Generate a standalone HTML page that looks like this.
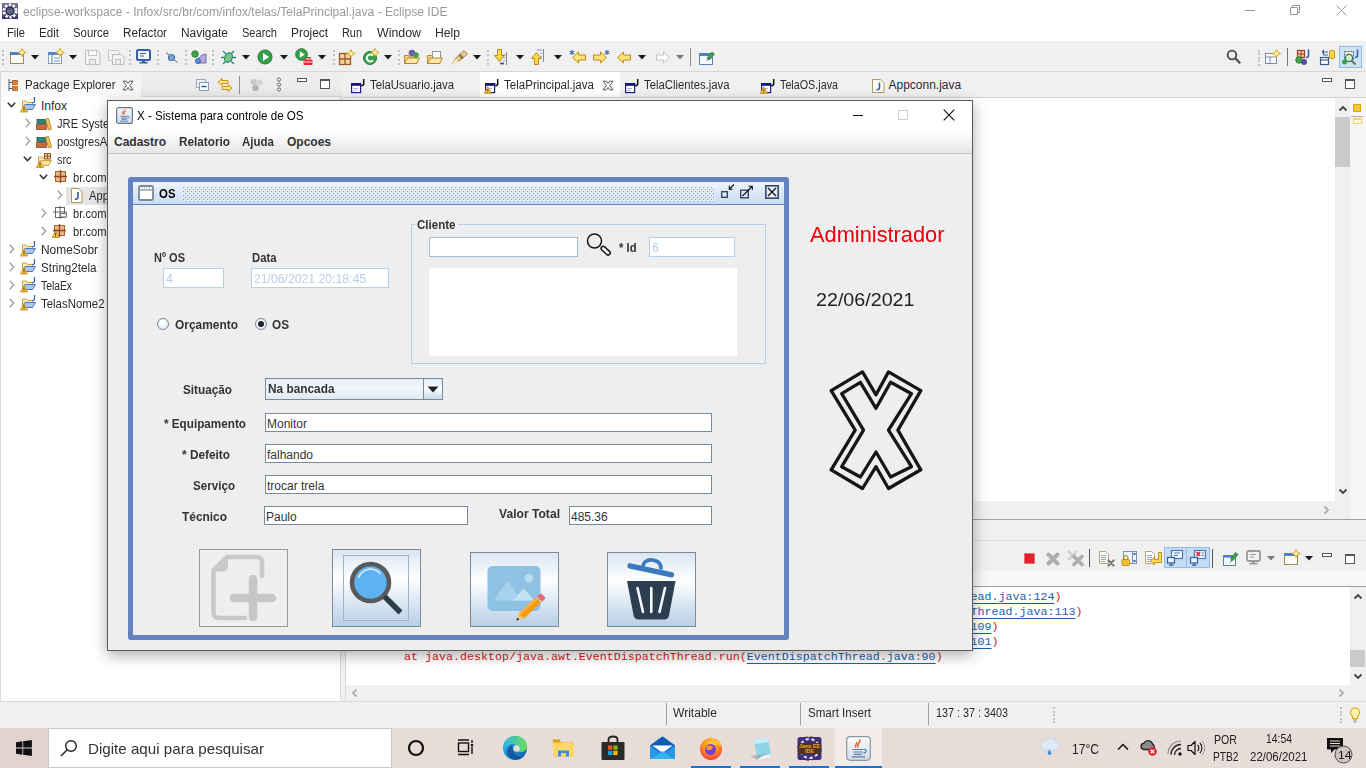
<!DOCTYPE html>
<html lang="pt-BR"><head><meta charset="utf-8"><title>eclipse-workspace - Infox - Eclipse IDE</title>
<style>
*{box-sizing:border-box;margin:0;padding:0}
html,body{width:1366px;height:768px;overflow:hidden;background:#f0f0f0;font-family:"Liberation Sans",sans-serif;}
div,span,svg{position:absolute}
.t{white-space:pre;transform-origin:0 50%;display:block}
.tf{background:#fff;border:1px solid #7a8a99}
.tfd{background:#fff;border:1px solid #b8cfe5}
.btn{border:1px solid #7a8a99;background:linear-gradient(180deg,#dbe6f2 0%,#ffffff 38%,#e3ecf6 62%,#b8cfe5 100%)}
</style></head><body>
<div style="left:0;top:0;width:1366px;height:41px;background:#fff"></div>
<div style="left:0;top:41px;width:1366px;height:31px;background:#f0f0f0;border-bottom:1px solid #d6d6d6"></div>
<div style="left:0;top:72px;width:341px;height:630px;background:#fff;border:1px solid #d9d9d9"></div>
<div style="left:1px;top:72px;width:140px;height:25px;background:linear-gradient(180deg,#f2f2f2,#fbfbfb)"></div>
<div style="left:141px;top:72px;width:200px;height:25px;background:linear-gradient(180deg,#efefef,#e9e9e9);border-bottom:1px solid #dadada"></div>
<div style="left:345px;top:72px;width:1021px;height:448px;background:#fff"></div>
<div style="left:345px;top:72px;width:1021px;height:25px;background:#f0f0f0"></div>
<div style="left:480px;top:72px;width:140px;height:26px;background:#fff"></div>
<div style="left:345px;top:97px;width:1021px;height:1px;background:#d2d2d2"></div>
<div style="left:1335px;top:98px;width:15px;height:403px;background:#f0f0f0"></div>
<div style="left:1335px;top:117px;width:15px;height:50px;background:#cacaca"></div>
<div style="left:1350px;top:98px;width:16px;height:421px;background:#f6f6f6"></div>
<div style="left:345px;top:501px;width:1005px;height:18px;background:#f0f0f0"></div>
<div style="left:345px;top:519px;width:1021px;height:1px;background:#a0a0a0"></div>
<div style="left:345px;top:540px;width:1021px;height:1px;background:#dcdcdc"></div>
<div style="left:345px;top:545px;width:1021px;height:26px;background:#f0f0f0"></div>
<div style="left:345px;top:571px;width:1021px;height:15px;background:#f7f7f7"></div>
<div style="left:345px;top:586px;width:1021px;height:115px;background:#fff;border-top:1px solid #a0a0a0;border-left:1px solid #d9d9d9"></div>
<div style="left:1350px;top:587px;width:16px;height:98px;background:#f0f0f0"></div>
<div style="left:1350px;top:650px;width:15px;height:17px;background:#cacaca"></div>
<div style="left:346px;top:685px;width:1020px;height:16px;background:#f0f0f0"></div>
<div style="left:0;top:701px;width:1366px;height:27px;background:#f0f0f0;border-top:1px solid #dadada"></div>
<div style="left:0;top:728px;width:1366px;height:40px;background:#e8dcd8"></div>
<div style="left:0;top:728px;width:48px;height:40px;background:#e3d3d0"></div>
<div style="left:48px;top:728px;width:344px;height:40px;background:#fff;border:1px solid #c8c8c8"></div>
<span class="t" style="left:23px;top:3.5px;font-size:12px;line-height:17px;color:#999;transform:scaleX(1.0071);">eclipse-workspace - Infox/src/br/com/infox/telas/TelaPrincipal.java - Eclipse IDE</span>
<span class="t" style="left:7px;top:24.5px;font-size:12px;line-height:17px;color:#2b2b2b;transform:scaleX(0.9305);">File</span>
<span class="t" style="left:39px;top:24.5px;font-size:12px;line-height:17px;color:#2b2b2b;transform:scaleX(0.9668);">Edit</span>
<span class="t" style="left:73px;top:24.5px;font-size:12px;line-height:17px;color:#2b2b2b;transform:scaleX(0.9466);">Source</span>
<span class="t" style="left:123px;top:24.5px;font-size:12px;line-height:17px;color:#2b2b2b;transform:scaleX(0.9700);">Refactor</span>
<span class="t" style="left:181px;top:24.5px;font-size:12px;line-height:17px;color:#2b2b2b;transform:scaleX(0.9921);">Navigate</span>
<span class="t" style="left:242px;top:24.5px;font-size:12px;line-height:17px;color:#2b2b2b;transform:scaleX(0.9203);">Search</span>
<span class="t" style="left:291px;top:24.5px;font-size:12px;line-height:17px;color:#2b2b2b;transform:scaleX(0.9904);">Project</span>
<span class="t" style="left:342px;top:24.5px;font-size:12px;line-height:17px;color:#2b2b2b;transform:scaleX(0.9084);">Run</span>
<span class="t" style="left:377px;top:24.5px;font-size:12px;line-height:17px;color:#2b2b2b;transform:scaleX(1.0307);">Window</span>
<span class="t" style="left:435px;top:24.5px;font-size:12px;line-height:17px;color:#2b2b2b;transform:scaleX(1.0127);">Help</span>
<span class="t" style="left:24.5px;top:76.5px;font-size:12px;line-height:17px;color:#2b2b2b;transform:scaleX(0.9555);">Package Explorer</span>
<span class="t" style="left:369.5px;top:76.5px;font-size:12px;line-height:17px;color:#2b2b2b;transform:scaleX(0.9468);">TelaUsuario.java</span>
<span class="t" style="left:503.5px;top:76.5px;font-size:12px;line-height:17px;color:#2b2b2b;transform:scaleX(0.9637);">TelaPrincipal.java</span>
<span class="t" style="left:643.5px;top:76.5px;font-size:12px;line-height:17px;color:#2b2b2b;transform:scaleX(0.9425);">TelaClientes.java</span>
<span class="t" style="left:780px;top:76.5px;font-size:12px;line-height:17px;color:#2b2b2b;transform:scaleX(0.8964);">TelaOS.java</span>
<span class="t" style="left:888.5px;top:76.5px;font-size:12px;line-height:17px;color:#2b2b2b;">Appconn.java</span>
<div style="left:66px;top:187px;width:60px;height:18px;background:#e5e5e5"></div>
<span class="t" style="left:41px;top:98px;font-size:12px;line-height:17px;color:#2b2b2b;">Infox</span>
<span class="t" style="left:56.5px;top:116px;font-size:12px;line-height:17px;color:#2b2b2b;transform:scaleX(.93);">JRE System Library [JavaSE-11]</span>
<span class="t" style="left:57px;top:134px;font-size:12px;line-height:17px;color:#2b2b2b;transform:scaleX(.93);">postgresAPI</span>
<span class="t" style="left:57px;top:152px;font-size:12px;line-height:17px;color:#2b2b2b;transform:scaleX(0.9062);">src</span>
<span class="t" style="left:73px;top:170px;font-size:12px;line-height:17px;color:#2b2b2b;transform:scaleX(.93);">br.com.infox.dal</span>
<span class="t" style="left:89px;top:188px;font-size:12px;line-height:17px;color:#2b2b2b;transform:scaleX(.93);">Appconn.java</span>
<span class="t" style="left:73px;top:206px;font-size:12px;line-height:17px;color:#2b2b2b;transform:scaleX(.93);">br.com.infox.icones</span>
<span class="t" style="left:73px;top:224px;font-size:12px;line-height:17px;color:#2b2b2b;transform:scaleX(.93);">br.com.infox.telas</span>
<span class="t" style="left:41px;top:242px;font-size:12px;line-height:17px;color:#2b2b2b;transform:scaleX(0.9937);">NomeSobr</span>
<span class="t" style="left:41px;top:260px;font-size:12px;line-height:17px;color:#2b2b2b;transform:scaleX(0.9673);">String2tela</span>
<span class="t" style="left:41px;top:278px;font-size:12px;line-height:17px;color:#2b2b2b;transform:scaleX(0.8604);">TelaEx</span>
<span class="t" style="left:41px;top:296px;font-size:12px;line-height:17px;color:#2b2b2b;transform:scaleX(0.9520);">TelasNome2</span>
<span class="t" style="left:404px;top:588.7px;font-size:11.67px;line-height:16px;color:#dc1616;font-family:'Liberation Mono', monospace;">at java.desktop/java.awt.EventDispatchThread.pumpEventsForFilter(<span style="position:static;color:#1a5fae;text-decoration:underline;text-underline-offset:2.5px;text-decoration-thickness:1px">EventDispatchThread.java:124</span>)</span>
<span class="t" style="left:404px;top:603.7px;font-size:11.67px;line-height:16px;color:#dc1616;font-family:'Liberation Mono', monospace;">at java.desktop/java.awt.EventDispatchThread.pumpEventsForHierarchy(<span style="position:static;color:#1a5fae;text-decoration:underline;text-underline-offset:2.5px;text-decoration-thickness:1px">EventDispatchThread.java:113</span>)</span>
<span class="t" style="left:404px;top:618.7px;font-size:11.67px;line-height:16px;color:#dc1616;font-family:'Liberation Mono', monospace;">at java.desktop/java.awt.EventDispatchThread.pumpEvents(<span style="position:static;color:#1a5fae;text-decoration:underline;text-underline-offset:2.5px;text-decoration-thickness:1px">EventDispatchThread.java:109</span>)</span>
<span class="t" style="left:404px;top:633.7px;font-size:11.67px;line-height:16px;color:#dc1616;font-family:'Liberation Mono', monospace;">at java.desktop/java.awt.EventDispatchThread.pumpEvents(<span style="position:static;color:#1a5fae;text-decoration:underline;text-underline-offset:2.5px;text-decoration-thickness:1px">EventDispatchThread.java:101</span>)</span>
<span class="t" style="left:404px;top:648.7px;font-size:11.67px;line-height:16px;color:#dc1616;font-family:'Liberation Mono', monospace;">at java.desktop/java.awt.EventDispatchThread.run(<span style="position:static;color:#1a5fae;text-decoration:underline;text-underline-offset:2.5px;text-decoration-thickness:1px">EventDispatchThread.java:90</span>)</span>
<span class="t" style="left:673px;top:704.5px;font-size:12px;line-height:17px;color:#2b2b2b;transform:scaleX(1.0046);">Writable</span>
<span class="t" style="left:808px;top:704.5px;font-size:12px;line-height:17px;color:#2b2b2b;transform:scaleX(0.9639);">Smart Insert</span>
<span class="t" style="left:936px;top:704.5px;font-size:12px;line-height:17px;color:#2b2b2b;transform:scaleX(0.8991);">137 : 37 : 3403</span>
<span class="t" style="left:88px;top:737.5px;font-size:15px;line-height:21px;color:#333;transform:scaleX(1.0099);">Digite aqui para pesquisar</span>
<span class="t" style="left:1071.5px;top:737.5px;font-size:15px;line-height:21px;color:#222;transform:scaleX(0.8056);">17°C</span>
<span class="t" style="left:1214px;top:731.5px;font-size:12px;line-height:17px;color:#222;transform:scaleX(0.8841);">POR</span>
<span class="t" style="left:1213px;top:749px;font-size:12px;line-height:17px;color:#222;transform:scaleX(0.8496);">PTB2</span>
<span class="t" style="left:1265.5px;top:731px;font-size:12px;line-height:17px;color:#222;transform:scaleX(0.8658);">14:54</span>
<span class="t" style="left:1250px;top:749px;font-size:12px;line-height:17px;color:#222;transform:scaleX(0.9573);">22/06/2021</span>
<svg style="left:2px;top:3px" width="16" height="16" viewBox="0 0 16 16"><defs><linearGradient id="ecg" x1="0" y1="0" x2="0" y2="1"><stop offset="0" stop-color="#77759a"/><stop offset=".75" stop-color="#4a4778"/><stop offset="1" stop-color="#2f2c72"/></linearGradient></defs><rect width="16" height="16" fill="url(#ecg)"/><circle cx="8" cy="8" r="6.300" fill="none" stroke="#fff" stroke-width="2.400" stroke-dasharray="2.400 1.560"/><circle cx="8" cy="8" r="5.200" fill="#fff"/><circle cx="8" cy="8" r="4.100" fill="#55527e" stroke="#17162c" stroke-width="1.100"/><path d="M5.200 7.500h5.600M5.200 9.300h5.600" stroke="#77759a" stroke-width=".8"/></svg>
<div style="left:1245px;top:10px;width:10px;height:1px;background:#999"></div>
<svg style="left:1290px;top:5px" width="10" height="10" viewBox="0 0 10 10"><path d="M2.5 2.5V.5h7v7h-2M.5 2.5h7v7h-7z" fill="none" stroke="#999" stroke-width="1"/></svg>
<svg style="left:1336px;top:5px" width="11" height="11" viewBox="0 0 11 11"><path d="M.5.5l10 10M10.500 .5l-10 10" stroke="#999" stroke-width="1"/></svg>
<div style="left:2px;top:50px;width:2px;height:2px;background:#c2c2c2"></div><div style="left:2px;top:54.4px;width:2px;height:2px;background:#c2c2c2"></div><div style="left:2px;top:58.8px;width:2px;height:2px;background:#c2c2c2"></div><div style="left:2px;top:63.2px;width:2px;height:2px;background:#c2c2c2"></div>
<svg style="left:9px;top:48px" width="18" height="17" viewBox="0 0 18 17"><rect x="1.500" y="4.500" width="13" height="11" fill="#fdfcf3" stroke="#9c8a55" stroke-width="1"/><rect x="1" y="4" width="14" height="3" fill="#4f7fc4"/><path d="M13 0.5l1.300 2.700 2.900 1.300-2.900 1.300-1.300 2.700-1.300-2.700-2.900-1.300 2.900-1.300z" fill="#fff3a8" stroke="#d6a21c" stroke-width=".9" stroke-linejoin="round"/></svg>
<svg style="left:31px;top:55px" width="8" height="5" viewBox="0 0 8 5"><path d="M0 0h8L4 4.6z" fill="#1a1a1a"/></svg>
<svg style="left:47px;top:48px" width="18" height="17" viewBox="0 0 18 17"><rect x="1.500" y="4.500" width="13" height="11" fill="#fdfdfd" stroke="#8aa0c0" stroke-width="1"/><rect x="1" y="4" width="14" height="3" fill="#5a86c8"/><path d="M5 7v9M7 10h6M7 13h6" stroke="#6a8fc8" stroke-width="1.2"/><path d="M13 0.5l1.300 2.700 2.900 1.300-2.900 1.300-1.300 2.700-1.300-2.700-2.900-1.300 2.900-1.300z" fill="#fff3a8" stroke="#d6a21c" stroke-width=".9" stroke-linejoin="round"/></svg>
<svg style="left:69px;top:55px" width="8" height="5" viewBox="0 0 8 5"><path d="M0 0h8L4 4.6z" fill="#1a1a1a"/></svg>
<svg style="left:85px;top:50px" width="16" height="15" viewBox="0 0 16 15"><path d="M.5.5h12l2.500 2.500v11.500h-14.500z" fill="#f3f3f3" stroke="#bcbcbc"/><rect x="3.500" y=".5" width="8" height="5" fill="#fafafa" stroke="#c4c4c4"/><rect x="4.500" y="9.500" width="6" height="5" fill="#e9e9e9" stroke="#c4c4c4"/></svg>
<svg style="left:108px;top:50px" width="17" height="15" viewBox="0 0 17 15"><path d="M.5.5h9l2 2v8h-11z" fill="#f3f3f3" stroke="#c6c6c6"/><path d="M4.500 4.500h9l2.500 2.500v7.500h-11.500z" fill="#f3f3f3" stroke="#bcbcbc"/><rect x="7.500" y="9.500" width="5" height="5" fill="#e9e9e9" stroke="#c4c4c4"/></svg>
<div style="left:129px;top:50px;width:2px;height:2px;background:#c2c2c2"></div><div style="left:129px;top:54.4px;width:2px;height:2px;background:#c2c2c2"></div><div style="left:129px;top:58.8px;width:2px;height:2px;background:#c2c2c2"></div><div style="left:129px;top:63.2px;width:2px;height:2px;background:#c2c2c2"></div>
<svg style="left:136px;top:49px" width="15" height="15" viewBox="0 0 15 15"><rect x="1" y="1" width="13" height="10" rx="1.500" fill="#f4f8ff" stroke="#3560a8" stroke-width="2"/><path d="M4 4.500h6M4 7h4" stroke="#3560a8" stroke-width="1.200"/><path d="M6 11h3v2h2.500v1.500h-8v-1.500h2.500z" fill="#3560a8"/></svg>
<div style="left:157px;top:50px;width:2px;height:2px;background:#c2c2c2"></div><div style="left:157px;top:54.4px;width:2px;height:2px;background:#c2c2c2"></div><div style="left:157px;top:58.8px;width:2px;height:2px;background:#c2c2c2"></div><div style="left:157px;top:63.2px;width:2px;height:2px;background:#c2c2c2"></div>
<svg style="left:165px;top:51px" width="14" height="13" viewBox="0 0 14 13"><circle cx="6.500" cy="6.500" r="3" fill="#7fb0e6" stroke="#3a6fb5" stroke-width="1.200"/><path d="M1 1.500l11.500 10" stroke="#8b8fa0" stroke-width="1.100"/></svg>
<div style="left:185px;top:50px;width:2px;height:2px;background:#c2c2c2"></div><div style="left:185px;top:54.4px;width:2px;height:2px;background:#c2c2c2"></div><div style="left:185px;top:58.8px;width:2px;height:2px;background:#c2c2c2"></div><div style="left:185px;top:63.2px;width:2px;height:2px;background:#c2c2c2"></div>
<svg style="left:190px;top:49px" width="18" height="17" viewBox="0 0 18 17"><path d="M8 14c0-5 2-8 8-9v9z" fill="#b8a8e0" stroke="#7a68b8" stroke-width="1"/><circle cx="5" cy="5" r="3.300" fill="#3fa24a" stroke="#2a7a34" stroke-width=".8"/><circle cx="8" cy="12" r="2.600" fill="#5a8ed6" stroke="#2f5fa8" stroke-width=".8"/></svg>
<div style="left:212px;top:50px;width:2px;height:2px;background:#c2c2c2"></div><div style="left:212px;top:54.4px;width:2px;height:2px;background:#c2c2c2"></div><div style="left:212px;top:58.8px;width:2px;height:2px;background:#c2c2c2"></div><div style="left:212px;top:63.2px;width:2px;height:2px;background:#c2c2c2"></div>
<svg style="left:220px;top:49px" width="17" height="17" viewBox="0 0 17 17"><path d="M3 2l3 3M14 2l-3 3M1 8.500h4M12 8.500h4M3 15l3-3M14 15l-3-3" stroke="#2d7f92" stroke-width="1.300" fill="none"/><ellipse cx="8.500" cy="8.500" rx="3.600" ry="5" fill="#7cc38a" stroke="#2d8a58" stroke-width="1.200" transform="rotate(25 8.500 8.500)"/></svg>
<svg style="left:242px;top:55px" width="8" height="5" viewBox="0 0 8 5"><path d="M0 0h8L4 4.6z" fill="#1a1a1a"/></svg>
<svg style="left:257px;top:49px" width="16" height="16" viewBox="0 0 16 16"><circle cx="8" cy="8" r="7" fill="#35a24a" stroke="#1f7a32" stroke-width="1"/><path d="M6 4v8l6-4z" fill="#fff"/></svg>
<svg style="left:280px;top:55px" width="8" height="5" viewBox="0 0 8 5"><path d="M0 0h8L4 4.6z" fill="#1a1a1a"/></svg>
<svg style="left:295px;top:48px" width="19" height="18" viewBox="0 0 19 18"><circle cx="6.500" cy="6.500" r="5.800" fill="#35a24a" stroke="#1f7a32" stroke-width="1"/><path d="M4.800 3.200v6.600l5-3.300z" fill="#fff"/><rect x="8.500" y="11.500" width="9" height="5.500" rx="1" fill="#e2262e"/><path d="M11 11.500v-1.500h4v1.500M8.500 14h9" stroke="#fff" stroke-width=".9" fill="none"/><path d="M11 11.500v-1.800h4v1.800" stroke="#e2262e" stroke-width="1.200" fill="none"/></svg>
<svg style="left:318px;top:55px" width="8" height="5" viewBox="0 0 8 5"><path d="M0 0h8L4 4.6z" fill="#1a1a1a"/></svg>
<div style="left:333px;top:50px;width:2px;height:2px;background:#c2c2c2"></div><div style="left:333px;top:54.4px;width:2px;height:2px;background:#c2c2c2"></div><div style="left:333px;top:58.8px;width:2px;height:2px;background:#c2c2c2"></div><div style="left:333px;top:63.2px;width:2px;height:2px;background:#c2c2c2"></div>
<svg style="left:338px;top:49px" width="18" height="17" viewBox="0 0 18 17"><rect x="1.500" y="4.500" width="11" height="11" fill="#f3d3a6" stroke="#9a5a22" stroke-width="1.300"/><path d="M7 4.500v11M1.500 10h11" stroke="#9a5a22" stroke-width="1.300"/><path d="M13 0.5l1.300 2.700 2.900 1.300-2.900 1.300-1.300 2.700-1.300-2.700-2.900-1.300 2.900-1.300z" fill="#fff3a8" stroke="#d6a21c" stroke-width=".9" stroke-linejoin="round"/></svg>
<svg style="left:362px;top:48px" width="18" height="18" viewBox="0 0 18 18"><circle cx="8" cy="10" r="6.500" fill="#35a24a" stroke="#1f7a32" stroke-width="1"/><path d="M11 7.500a3.600 3.600 0 1 0 0 5" stroke="#fff" stroke-width="2" fill="none"/><path d="M13 0.5l1.300 2.700 2.900 1.300-2.900 1.300-1.300 2.700-1.300-2.700-2.900-1.300 2.900-1.300z" fill="#fff3a8" stroke="#d6a21c" stroke-width=".9" stroke-linejoin="round"/></svg>
<svg style="left:384px;top:55px" width="8" height="5" viewBox="0 0 8 5"><path d="M0 0h8L4 4.6z" fill="#1a1a1a"/></svg>
<div style="left:398px;top:50px;width:2px;height:2px;background:#c2c2c2"></div><div style="left:398px;top:54.4px;width:2px;height:2px;background:#c2c2c2"></div><div style="left:398px;top:58.8px;width:2px;height:2px;background:#c2c2c2"></div><div style="left:398px;top:63.2px;width:2px;height:2px;background:#c2c2c2"></div>
<svg style="left:403px;top:48px" width="19" height="18" viewBox="0 0 19 18"><path d="M1.500 15.500v-8h4l1.500 1.500h7v6.500z" fill="#f6d58a" stroke="#b98522" stroke-width="1"/><path d="M1.500 15.500l3-5.500h12l-3 5.500z" fill="#fbe6ac" stroke="#b98522" stroke-width="1"/><circle cx="9" cy="5" r="3.300" fill="#6a5fb0"/><circle cx="13" cy="7" r="2.800" fill="#3fa24a"/></svg>
<svg style="left:426px;top:49px" width="18" height="17" viewBox="0 0 18 17"><path d="M1.500 14.500v-8h4l1.500 1.500h7v6.500z" fill="#f6d58a" stroke="#b98522" stroke-width="1"/><rect x="6.500" y="2.500" width="8" height="7" fill="#fff" stroke="#8a8a8a" stroke-width=".9"/><path d="M1.500 14.500l3-5.500h12l-3 5.500z" fill="#fbe6ac" stroke="#b98522" stroke-width="1"/></svg>
<svg style="left:450px;top:48px" width="20" height="18" viewBox="0 0 20 18"><path d="M2 16l4-6 8-7.500 3.500 3.500-8.500 7z" fill="#e9c98a" stroke="#b08a3a" stroke-width="1"/><path d="M9 6.500l4 4" stroke="#8a7a5a" stroke-width="2.500"/><path d="M1 17l5-6 2.500 2.500z" fill="#fff6d8"/></svg>
<svg style="left:473px;top:55px" width="8" height="5" viewBox="0 0 8 5"><path d="M0 0h8L4 4.6z" fill="#1a1a1a"/></svg>
<div style="left:487px;top:50px;width:2px;height:2px;background:#c2c2c2"></div><div style="left:487px;top:54.4px;width:2px;height:2px;background:#c2c2c2"></div><div style="left:487px;top:58.8px;width:2px;height:2px;background:#c2c2c2"></div><div style="left:487px;top:63.2px;width:2px;height:2px;background:#c2c2c2"></div>
<svg style="left:494px;top:48px" width="16" height="18" viewBox="0 0 16 18"><path d="M3.500 1.500h4v6h3l-5 6-5-6h3z" fill="#ffd84a" stroke="#b98a12" stroke-width="1"/><path d="M12.500 4v13" stroke="#8a8a8a" stroke-width="1"/><path d="M9 6.500h2.500M9 9.500h2.500M9 12.500h2.500" stroke="#9ab2d8" stroke-width="1"/><path d="M6 15.500h4" stroke="#2f5fb0" stroke-width="1.800"/></svg>
<svg style="left:516px;top:55px" width="8" height="5" viewBox="0 0 8 5"><path d="M0 0h8L4 4.6z" fill="#1a1a1a"/></svg>
<svg style="left:531px;top:48px" width="16" height="18" viewBox="0 0 16 18"><path d="M3.500 16.500h4v-6h3l-5-6-5 6h3z" fill="#ffd84a" stroke="#b98a12" stroke-width="1"/><path d="M12.500 1v13" stroke="#8a8a8a" stroke-width="1"/><path d="M9 2.500h2.500M9 5.500h2.500M9 8.500h2.500" stroke="#9ab2d8" stroke-width="1"/><path d="M6 2h4" stroke="#9ab2d8" stroke-width="1.500"/></svg>
<svg style="left:554px;top:55px" width="8" height="5" viewBox="0 0 8 5"><path d="M0 0h8L4 4.6z" fill="#1a1a1a"/></svg>
<svg style="left:569px;top:49px" width="18" height="17" viewBox="0 0 18 17"><path d="M3.5 8.500l6-5.500v3h7v5h-7v3z" fill="#ffe27a" stroke="#b98a12" stroke-width="1" stroke-linejoin="round"/><path d="M3 1v5M.8 2.200l4.400 2.600M.8 4.800l4.400-2.600" stroke="#3f68b0" stroke-width="1.100"/></svg>
<svg style="left:592px;top:49px" width="18" height="17" viewBox="0 0 18 17"><path d="M14.5 8.500l-6-5.500v3h-7v5h7v3z" fill="#ffe27a" stroke="#b98a12" stroke-width="1" stroke-linejoin="round"/><path d="M15 1v5M12.800 2.200l4.400 2.600M12.800 4.800l4.400-2.600" stroke="#3f68b0" stroke-width="1.100"/></svg>
<svg style="left:616px;top:49px" width="16" height="17" viewBox="0 0 16 17"><path d="M1.5 8.500l6-5.500v3h7v5h-7v3z" fill="#ffe27a" stroke="#b98a12" stroke-width="1" stroke-linejoin="round"/></svg>
<svg style="left:638px;top:55px" width="8" height="5" viewBox="0 0 8 5"><path d="M0 0h8L4 4.6z" fill="#1a1a1a"/></svg>
<svg style="left:655px;top:49px" width="16" height="17" viewBox="0 0 16 17"><path d="M14.5 8.500l-6-5.500v3h-7v5h7v3z" fill="#fbfbfb" stroke="#c4c4c4" stroke-width="1" stroke-linejoin="round"/></svg>
<svg style="left:676px;top:55px" width="8" height="5" viewBox="0 0 8 5"><path d="M0 0h8L4 4.6z" fill="#777"/></svg>
<div style="left:690px;top:48px;width:1px;height:18px;background:#8f8f8f"></div>
<svg style="left:698px;top:49px" width="18" height="17" viewBox="0 0 18 17"><rect x="1.500" y="4.500" width="13" height="11" fill="#f4f8ff" stroke="#5a7fb8" stroke-width="1"/><rect x="1" y="4" width="14" height="3" fill="#4f7fc4"/><path d="M9 9l5-6 2.500 2-5 6z" fill="#3fa24a" stroke="#1f7a32" stroke-width=".7"/><path d="M9 11.500l2-2.500" stroke="#555" stroke-width="1"/></svg>
<svg style="left:1226px;top:49px" width="16" height="16" viewBox="0 0 16 16"><circle cx="6" cy="6" r="4.300" fill="none" stroke="#4a4a4a" stroke-width="1.800"/><path d="M9.200 9.200l5 5" stroke="#4a4a4a" stroke-width="2.200"/></svg>
<div style="left:1258px;top:49.5px;width:2px;height:2px;background:#c2c2c2"></div><div style="left:1258px;top:53.1px;width:2px;height:2px;background:#c2c2c2"></div><div style="left:1258px;top:56.7px;width:2px;height:2px;background:#c2c2c2"></div><div style="left:1258px;top:60.3px;width:2px;height:2px;background:#c2c2c2"></div><div style="left:1258px;top:63.9px;width:2px;height:2px;background:#c2c2c2"></div>
<svg style="left:1264px;top:49px" width="18" height="17" viewBox="0 0 18 17"><rect x="1.500" y="4.500" width="11" height="10" fill="#fff" stroke="#7a8a9a" stroke-width="1"/><path d="M1.500 8h11M6 8v6.500" stroke="#7a8a9a" stroke-width="1"/><path d="M12.5 0.5l1.300 2.700 2.900 1.300-2.900 1.300-1.300 2.700-1.300-2.700-2.900-1.300 2.900-1.300z" fill="#fff3a8" stroke="#d6a21c" stroke-width=".9" stroke-linejoin="round"/></svg>
<div style="left:1287px;top:48px;width:1px;height:18px;background:#777"></div>
<svg style="left:1294px;top:48px" width="18" height="18" viewBox="0 0 18 18"><rect x="3.500" y="2.500" width="7" height="7" fill="#f3d3a6" stroke="#9a3a22" stroke-width="1.200"/><path d="M7 2.500v7M3.500 6h7" stroke="#9a3a22" stroke-width="1"/><path d="M14.500 1.500v6c0 1.500-1 2-2.500 2" stroke="#3560a8" stroke-width="1.600" fill="none"/><circle cx="5" cy="12" r="3.300" fill="#3fa24a" stroke="#2a7a34" stroke-width=".8"/><circle cx="10" cy="14" r="3" fill="#5a4f9a"/></svg>
<svg style="left:1318px;top:48px" width="19" height="18" viewBox="0 0 19 18"><rect x="11.500" y="2.500" width="5" height="8" rx="1.500" fill="#ffd84a" stroke="#c9961a" stroke-width="1"/><rect x="2.500" y="9.500" width="8" height="7" fill="#fff" stroke="#3a5a8a" stroke-width="1.200"/><path d="M2.500 12h8" stroke="#3a5a8a" stroke-width="1.200"/><path d="M4 4h6M4 4l2-2M4 4l2 2M10 7H5" stroke="#3560a8" stroke-width="1.100" fill="none"/></svg>
<div style="left:1339px;top:46px;width:23px;height:22px;background:#cfe3f8;border:1px solid #8fbbe8"></div>
<svg style="left:1341px;top:48px" width="19" height="18" viewBox="0 0 19 18"><rect x="3.500" y="3.500" width="9" height="8" fill="#f3e3c6" stroke="#3a6a9a" stroke-width="1" stroke-dasharray="2 1"/><path d="M16.500 1.500v6c0 1.500-1 2-2.500 2" stroke="#3560a8" stroke-width="1.600" fill="none"/><circle cx="8" cy="10" r="3.600" fill="#d8f0d0" stroke="#2a7a5a" stroke-width="1.300"/><path d="M10.500 12.500l4 4" stroke="#6a6a6a" stroke-width="2"/><circle cx="3.500" cy="14" r="2.500" fill="#3fa24a"/></svg>
<svg style="left:350px;top:78px" width="16" height="16" viewBox="0 0 16 16"><rect x="1.600" y="5.600" width="9" height="9" fill="#fff" stroke="#1a1a8a" stroke-width="1.200"/><rect x="1" y="5" width="10.200" height="2.800" fill="#15157e"/><path d="M3.500 10.500h4.500M3.500 12.500h3" stroke="#b0b0c8" stroke-width="1"/><path d="M13.700 1v4.800c0 1.500-.9 1.900-2.500 1.900" stroke="#111" stroke-width="1.500" fill="none"/></svg>
<svg style="left:484px;top:78px" width="16" height="16" viewBox="0 0 16 16"><rect x="1.600" y="5.600" width="9" height="9" fill="#fff" stroke="#1a1a8a" stroke-width="1.200"/><rect x="1" y="5" width="10.200" height="2.800" fill="#15157e"/><path d="M3.500 10.500h4.500M3.500 12.500h3" stroke="#b0b0c8" stroke-width="1"/><path d="M13.700 1v4.800c0 1.500-.9 1.900-2.500 1.900" stroke="#111" stroke-width="1.500" fill="none"/><path d="M3.8 8.8l3.600 6.500h-7.200z" fill="#f6c646" stroke="#c08a1a" stroke-width=".8" stroke-linejoin="round"/><path d="M3.8 11.0v2.200M3.8 13.8v.9" stroke="#4a3a10" stroke-width="1"/></svg>
<svg style="left:624px;top:78px" width="16" height="16" viewBox="0 0 16 16"><rect x="1.600" y="5.600" width="9" height="9" fill="#fff" stroke="#1a1a8a" stroke-width="1.200"/><rect x="1" y="5" width="10.200" height="2.800" fill="#15157e"/><path d="M3.500 10.500h4.500M3.500 12.500h3" stroke="#b0b0c8" stroke-width="1"/><path d="M13.700 1v4.800c0 1.500-.9 1.900-2.500 1.900" stroke="#111" stroke-width="1.500" fill="none"/></svg>
<svg style="left:760px;top:78px" width="16" height="16" viewBox="0 0 16 16"><rect x="1.600" y="5.600" width="9" height="9" fill="#fff" stroke="#1a1a8a" stroke-width="1.200"/><rect x="1" y="5" width="10.200" height="2.800" fill="#15157e"/><path d="M3.500 10.500h4.500M3.500 12.500h3" stroke="#b0b0c8" stroke-width="1"/><path d="M13.700 1v4.800c0 1.500-.9 1.900-2.500 1.900" stroke="#111" stroke-width="1.500" fill="none"/><path d="M3.8 8.8l3.600 6.500h-7.200z" fill="#f6c646" stroke="#c08a1a" stroke-width=".8" stroke-linejoin="round"/><path d="M3.8 11.0v2.200M3.8 13.8v.9" stroke="#4a3a10" stroke-width="1"/></svg>
<svg style="left:872px;top:79px" width="13" height="14" viewBox="0 0 13 14"><path d="M.5.5h8l3.500 3.500v9.500h-11.500z" fill="#fffdf2" stroke="#a89a6a" stroke-width="1"/><path d="M7.500 3.500v5c0 1.800-1 2.300-3 2" stroke="#2f5fb0" stroke-width="1.600" fill="none"/></svg>
<svg style="left:122px;top:79.500px" width="12.100" height="11" viewBox="0 0 11 10"><path d="M1 1l3 0 1.500 2.200L7 1l3 0-3 4 3 4-3 0-1.500-2.200L4 9 1 9l3-4z" fill="#fff" stroke="#555" stroke-width=".9" stroke-linejoin="round"/></svg>
<svg style="left:602px;top:79.500px" width="12.100" height="11" viewBox="0 0 11 10"><path d="M1 1l3 0 1.500 2.200L7 1l3 0-3 4 3 4-3 0-1.500-2.200L4 9 1 9l3-4z" fill="#fff" stroke="#555" stroke-width=".9" stroke-linejoin="round"/></svg>
<svg style="left:8px;top:79px" width="11" height="13" viewBox="0 0 11 13"><path d="M1 0v12M1 3.500h3M1 9.500h3" stroke="#555" stroke-width="1"/><rect x="4.500" y="1.500" width="5" height="4" fill="#e0924a" stroke="#a85a1a" stroke-width=".8"/><rect x="4.500" y="7.500" width="5" height="4" fill="#e0924a" stroke="#a85a1a" stroke-width=".8"/><path d="M7 1.500v4M7 7.500v4" stroke="#a85a1a" stroke-width=".6"/></svg>
<svg style="left:195px;top:78px" width="15" height="14" viewBox="0 0 15 14"><rect x="1.500" y="1.500" width="9" height="8" fill="#eef3fa" stroke="#9aaac0" stroke-width="1"/><rect x="4.500" y="4.500" width="9" height="8" fill="#f4f8ff" stroke="#8a9ab8" stroke-width="1"/><path d="M6.500 8.500h5" stroke="#2a5aa8" stroke-width="1.400"/></svg>
<svg style="left:217px;top:77px" width="16" height="16" viewBox="0 0 16 16"><path d="M1 5l4-3.500v2h6v3H5v2z" fill="#ffe27a" stroke="#c9961a" stroke-width="1" stroke-linejoin="round"/><path d="M15 11l-4-3.500v2H5v3h6v2z" fill="#ffe27a" stroke="#c9961a" stroke-width="1" stroke-linejoin="round"/></svg>
<div style="left:239px;top:76px;width:1px;height:18px;background:#8f8f8f"></div>
<svg style="left:249px;top:78px" width="15" height="14" viewBox="0 0 15 14"><circle cx="4.500" cy="4" r="3" fill="#c9c9c9"/><circle cx="10.500" cy="4.500" r="3" fill="#d4d4d4"/><circle cx="6.500" cy="10" r="3.200" fill="#b4b4b4"/></svg>
<svg style="left:276px;top:77px" width="6" height="15" viewBox="0 0 6 15"><circle cx="3" cy="2.500" r="1.600" fill="#fff" stroke="#555" stroke-width=".9"/><circle cx="3" cy="7.500" r="1.600" fill="#fff" stroke="#555" stroke-width=".9"/><circle cx="3" cy="12.500" r="1.600" fill="#fff" stroke="#555" stroke-width=".9"/></svg>
<div style="left:297px;top:78px;width:10px;height:4px;border:1px solid #555;background:#fff"></div><div style="left:320px;top:79px;width:10px;height:10px;border:1px solid #555;border-top-width:2px;background:#fff"></div>
<div style="left:1322px;top:78px;width:10px;height:4px;border:1px solid #555;background:#fff"></div><div style="left:1345px;top:79px;width:10px;height:10px;border:1px solid #555;border-top-width:2px;background:#fff"></div>
<svg style="left:7px;top:102px" width="9" height="6" viewBox="0 0 9 6"><path d="M.8.800l3.700 3.800 3.700-3.800" stroke="#333" stroke-width="1.500" fill="none"/></svg>
<svg style="left:20px;top:97px" width="17" height="16" viewBox="0 0 17 16"><path d="M2.500 12.500v-8.500h4l1 1.500h5v3" fill="#fbe9b5" stroke="#c9a24a" stroke-width="1"/><path d="M2.500 12.500l2.500-5h10.500l-3 5z" fill="#a8c8f0" stroke="#4a78c0" stroke-width="1"/><path d="M14.500 0v4c0 1.200-.8 1.500-2.200 1.500" stroke="#2f5fb0" stroke-width="1.200" fill="none"/><path d="M4 8.5l3.600 6.500h-7.200z" fill="#f6c646" stroke="#c08a1a" stroke-width=".8" stroke-linejoin="round"/><path d="M4 10.7v2.200M4 13.5v.9" stroke="#4a3a10" stroke-width="1"/></svg>
<svg style="left:25px;top:118px" width="6" height="10" viewBox="0 0 6 10"><path d="M.8.800l3.800 4.200-3.800 4.200" stroke="#a0a0a0" stroke-width="1.400" fill="none"/></svg>
<svg style="left:36px;top:118px" width="16" height="13" viewBox="0 0 16 13"><rect x="1" y="1.500" width="9" height="4" fill="#2a8a7a" stroke="#1a5a5a" stroke-width=".8"/><rect x=".5" y="6.500" width="10" height="5" fill="#c86a3a" stroke="#8a4a2a" stroke-width=".8"/><path d="M9.500 1l3-.8 3 11-3 .8z" fill="#f0c060" stroke="#b0842a" stroke-width=".8"/></svg>
<svg style="left:25px;top:136px" width="6" height="10" viewBox="0 0 6 10"><path d="M.8.800l3.800 4.200-3.800 4.200" stroke="#a0a0a0" stroke-width="1.400" fill="none"/></svg>
<svg style="left:36px;top:136px" width="16" height="13" viewBox="0 0 16 13"><rect x="1" y="1.500" width="9" height="4" fill="#2a8a7a" stroke="#1a5a5a" stroke-width=".8"/><rect x=".5" y="6.500" width="10" height="5" fill="#c86a3a" stroke="#8a4a2a" stroke-width=".8"/><path d="M9.500 1l3-.8 3 11-3 .8z" fill="#f0c060" stroke="#b0842a" stroke-width=".8"/></svg>
<svg style="left:23px;top:156px" width="9" height="6" viewBox="0 0 9 6"><path d="M.8.800l3.700 3.800 3.700-3.800" stroke="#333" stroke-width="1.500" fill="none"/></svg>
<svg style="left:36px;top:152px" width="17" height="16" viewBox="0 0 17 16"><path d="M2.500 13.500v-8.500h4l1 1.500h4" fill="#fbe9b5" stroke="#c9a24a" stroke-width="1"/><path d="M2.500 13.500l2.500-5h10.500l-3 5z" fill="#fbe3a0" stroke="#c9a24a" stroke-width="1"/><rect x="8.500" y="1.500" width="6" height="5.500" fill="#f0d0a8" stroke="#8a4a1a" stroke-width=".9"/><path d="M11.500 1.500v5.500M8.500 4.200h6" stroke="#8a4a1a" stroke-width=".9"/><path d="M4 9l3.600 6.500h-7.200z" fill="#f6c646" stroke="#c08a1a" stroke-width=".8" stroke-linejoin="round"/><path d="M4 11.2v2.200M4 14v.9" stroke="#4a3a10" stroke-width="1"/></svg>
<svg style="left:39px;top:174px" width="9" height="6" viewBox="0 0 9 6"><path d="M.8.800l3.700 3.800 3.700-3.800" stroke="#333" stroke-width="1.500" fill="none"/></svg>
<svg style="left:53px;top:170px" width="15" height="15" viewBox="0 0 15 15"><rect x="2.500" y="1.500" width="10" height="10" fill="#e8b88a" stroke="#a8622a" stroke-width="1"/><path d="M7.500 0v13M1 6.500h13" stroke="#8a4a1a" stroke-width="1.300"/></svg>
<svg style="left:57px;top:190px" width="6" height="10" viewBox="0 0 6 10"><path d="M.8.800l3.800 4.200-3.800 4.200" stroke="#a0a0a0" stroke-width="1.400" fill="none"/></svg>
<svg style="left:71px;top:188px" width="12" height="15" viewBox="0 0 12 15"><path d="M.5.500h7l3.500 3.500v10.500h-10.500z" fill="#fffdf2" stroke="#a89a6a" stroke-width="1"/><path d="M7 4v5c0 1.800-1 2.300-3 2" stroke="#2f5fb0" stroke-width="1.600" fill="none"/></svg>
<svg style="left:41px;top:208px" width="6" height="10" viewBox="0 0 6 10"><path d="M.8.800l3.800 4.200-3.800 4.200" stroke="#a0a0a0" stroke-width="1.400" fill="none"/></svg>
<svg style="left:53px;top:206px" width="15" height="15" viewBox="0 0 15 15"><rect x="2.500" y="1.500" width="9" height="10" fill="#fff" stroke="#666" stroke-width="1"/><path d="M7 0v13M0 6h14" stroke="#666" stroke-width="1"/><rect x="7.500" y="7.500" width="6" height="3.500" fill="#fff" stroke="#666" stroke-width=".9"/></svg>
<svg style="left:41px;top:226px" width="6" height="10" viewBox="0 0 6 10"><path d="M.8.800l3.800 4.200-3.800 4.200" stroke="#a0a0a0" stroke-width="1.400" fill="none"/></svg>
<svg style="left:52px;top:224px" width="15" height="15" viewBox="0 0 15 15"><rect x="2.500" y="1.500" width="10" height="10" fill="#e8b88a" stroke="#a8622a" stroke-width="1"/><path d="M7.500 0v13M1 6.500h13" stroke="#8a4a1a" stroke-width="1.300"/><path d="M3.6 7l3.600 6.500h-7.200z" fill="#f6c646" stroke="#c08a1a" stroke-width=".8" stroke-linejoin="round"/><path d="M3.6 9.2v2.200M3.6 12v.9" stroke="#4a3a10" stroke-width="1"/></svg>
<svg style="left:9px;top:244px" width="6" height="10" viewBox="0 0 6 10"><path d="M.8.800l3.800 4.200-3.800 4.200" stroke="#a0a0a0" stroke-width="1.400" fill="none"/></svg>
<svg style="left:20px;top:241px" width="17" height="16" viewBox="0 0 17 16"><path d="M2.500 12.500v-8.500h4l1 1.500h5v3" fill="#fbe9b5" stroke="#c9a24a" stroke-width="1"/><path d="M2.500 12.500l2.500-5h10.500l-3 5z" fill="#a8c8f0" stroke="#4a78c0" stroke-width="1"/><path d="M14.500 0v4c0 1.200-.8 1.500-2.200 1.500" stroke="#2f5fb0" stroke-width="1.200" fill="none"/><path d="M4 8.5l3.600 6.500h-7.200z" fill="#f6c646" stroke="#c08a1a" stroke-width=".8" stroke-linejoin="round"/><path d="M4 10.7v2.200M4 13.5v.9" stroke="#4a3a10" stroke-width="1"/></svg>
<svg style="left:9px;top:262px" width="6" height="10" viewBox="0 0 6 10"><path d="M.8.800l3.800 4.200-3.800 4.200" stroke="#a0a0a0" stroke-width="1.400" fill="none"/></svg>
<svg style="left:20px;top:259px" width="17" height="16" viewBox="0 0 17 16"><path d="M2.500 12.500v-8.500h4l1 1.500h5v3" fill="#fbe9b5" stroke="#c9a24a" stroke-width="1"/><path d="M2.500 12.500l2.500-5h10.500l-3 5z" fill="#a8c8f0" stroke="#4a78c0" stroke-width="1"/><path d="M14.500 0v4c0 1.200-.8 1.500-2.200 1.500" stroke="#2f5fb0" stroke-width="1.200" fill="none"/><path d="M4 8.5l3.600 6.500h-7.200z" fill="#f6c646" stroke="#c08a1a" stroke-width=".8" stroke-linejoin="round"/><path d="M4 10.7v2.200M4 13.5v.9" stroke="#4a3a10" stroke-width="1"/></svg>
<svg style="left:9px;top:280px" width="6" height="10" viewBox="0 0 6 10"><path d="M.8.800l3.800 4.200-3.800 4.200" stroke="#a0a0a0" stroke-width="1.400" fill="none"/></svg>
<svg style="left:20px;top:277px" width="17" height="16" viewBox="0 0 17 16"><path d="M2.500 12.500v-8.500h4l1 1.500h5v3" fill="#fbe9b5" stroke="#c9a24a" stroke-width="1"/><path d="M2.500 12.500l2.500-5h10.500l-3 5z" fill="#a8c8f0" stroke="#4a78c0" stroke-width="1"/><path d="M14.500 0v4c0 1.200-.8 1.500-2.200 1.500" stroke="#2f5fb0" stroke-width="1.200" fill="none"/><path d="M4 8.5l3.600 6.500h-7.200z" fill="#f6c646" stroke="#c08a1a" stroke-width=".8" stroke-linejoin="round"/><path d="M4 10.7v2.200M4 13.5v.9" stroke="#4a3a10" stroke-width="1"/></svg>
<svg style="left:9px;top:298px" width="6" height="10" viewBox="0 0 6 10"><path d="M.8.800l3.800 4.200-3.800 4.200" stroke="#a0a0a0" stroke-width="1.400" fill="none"/></svg>
<svg style="left:20px;top:295px" width="17" height="16" viewBox="0 0 17 16"><path d="M2.500 12.500v-8.500h4l1 1.500h5v3" fill="#fbe9b5" stroke="#c9a24a" stroke-width="1"/><path d="M2.500 12.500l2.500-5h10.500l-3 5z" fill="#a8c8f0" stroke="#4a78c0" stroke-width="1"/><path d="M14.500 0v4c0 1.200-.8 1.500-2.200 1.500" stroke="#2f5fb0" stroke-width="1.200" fill="none"/><path d="M4 8.5l3.600 6.500h-7.200z" fill="#f6c646" stroke="#c08a1a" stroke-width=".8" stroke-linejoin="round"/><path d="M4 10.7v2.200M4 13.5v.9" stroke="#4a3a10" stroke-width="1"/></svg>
<div style="left:1024px;top:553px;width:11px;height:11px;background:#e0202c;border:1px solid #f06a6a;border-radius:1px"></div>
<svg style="left:1046px;top:552px" width="14" height="14" viewBox="0 0 14 14"><path d="M2.5 2.5l9 9M11.5 2.5l-9 9" stroke="#adadad" stroke-width="4" stroke-linecap="round"/></svg>
<svg style="left:1067px;top:550px" width="18" height="17" viewBox="0 0 18 17"><path d="M2 2l7 7M9 2l-7 7" stroke="#d2d2d2" stroke-width="2.8" stroke-linecap="round"/><path d="M7 6.5l8 8M15 6.5l-8 8" stroke="#adadad" stroke-width="3.6" stroke-linecap="round"/></svg>
<div style="left:1089px;top:549px;width:1px;height:18px;background:#555"></div>
<svg style="left:1098px;top:550px" width="18" height="17" viewBox="0 0 18 17"><path d="M1.5 1.5h6l3 3v9h-9z" fill="#fff" stroke="#a89a6a" stroke-width=".9"/><path d="M3 5.5h5M3 7.5h5M3 9.5h5M3 11.5h4" stroke="#6a8fd0" stroke-width=".8"/><path d="M10.5 10.5l5 5M15.5 10.5l-5 5" stroke="#777" stroke-width="2.2" stroke-linecap="round"/></svg>
<svg style="left:1121px;top:550px" width="18" height="17" viewBox="0 0 18 17"><rect x="2.500" y="1.500" width="13" height="12" fill="#eef4fb" stroke="#7a94b8" stroke-width="1"/><path d="M11.500 1.500v12" stroke="#7a94b8" stroke-width="1"/><rect x="12.500" y="3" width="2" height="2" fill="#3a5a9a"/><rect x="12.500" y="10" width="2" height="2" fill="#3a5a9a"/><rect x="1" y="9.500" width="7.500" height="6" rx="1" fill="#f2c030" stroke="#b98a12" stroke-width=".9"/><path d="M2.800 9.500v-2a2 2 0 0 1 4 0v2" stroke="#b98a12" stroke-width="1.200" fill="none"/></svg>
<svg style="left:1144px;top:550px" width="18" height="17" viewBox="0 0 18 17"><path d="M1.5 1.5h6l3 3v9h-9z" fill="#fff" stroke="#a89a6a" stroke-width=".9"/><path d="M3 5.5h5M3 7.5h5M3 9.5h5M3 11.5h4" stroke="#6a8fd0" stroke-width=".8"/><path d="M14.500 2.500v7h-4v-2.500l-4 4 4 4v-2.500h7v-10z" fill="#ffd84a" stroke="#b98a12" stroke-width=".9" stroke-linejoin="round"/></svg>
<div style="left:1164px;top:547px;width:23px;height:21px;background:#c6dcf5;border:1px solid #93bde9"></div>
<div style="left:1187px;top:547px;width:23px;height:21px;background:#c6dcf5;border:1px solid #93bde9;border-left:none"></div>
<svg style="left:1166px;top:549px" width="18" height="17" viewBox="0 0 18 17"><rect x="5.500" y="1.500" width="11" height="8" fill="#f4f8ff" stroke="#4a78b8" stroke-width="1.200"/><path d="M8 4h6M8 6.500h4" stroke="#4a78b8" stroke-width="1"/><rect x="1.500" y="8.500" width="7" height="5.500" fill="#e8f0fb" stroke="#2f5fa8" stroke-width="1.200"/><path d="M3 16.200h4.500M5.200 14v2" stroke="#2f5fa8" stroke-width="1.300"/></svg>
<svg style="left:1189px;top:549px" width="18" height="17" viewBox="0 0 18 17"><rect x="5.500" y="1.500" width="11" height="8" fill="#f4f8ff" stroke="#4a78b8" stroke-width="1.200"/><path d="M7.500 3l3.500 4M11 3l-3.500 4" stroke="#e02030" stroke-width="1.600"/><path d="M12.500 4h2.500M12.500 6.500h2.500" stroke="#4a78b8" stroke-width="1"/><rect x="1.500" y="8.500" width="7" height="5.500" fill="#e8f0fb" stroke="#2f5fa8" stroke-width="1.200"/><path d="M3 16.200h4.500M5.200 14v2" stroke="#2f5fa8" stroke-width="1.300"/></svg>
<div style="left:1212px;top:549px;width:1px;height:19px;background:#555"></div>
<svg style="left:1222px;top:550px" width="18" height="17" viewBox="0 0 18 17"><rect x="1.500" y="5.500" width="12" height="10" fill="#f4f8ff" stroke="#5a7fb8" stroke-width="1"/><rect x="1" y="5" width="13" height="2.600" fill="#4f7fc4"/><path d="M8.500 9l5-6.500 2.500 2-5 6z" fill="#3fa24a" stroke="#1f7a32" stroke-width=".7"/><path d="M8 12.500l2.200-2.800" stroke="#555" stroke-width="1"/></svg>
<svg style="left:1246px;top:550px" width="15" height="16" viewBox="0 0 15 16"><rect x="1" y="1" width="13" height="10" rx="1.500" fill="#f1f1f1" stroke="#9a9a9a" stroke-width="1.800"/><path d="M4 4.500h6M4 7h4" stroke="#9a9a9a" stroke-width="1.100"/><path d="M6 11h3v2h2.500v1.500h-8v-1.500h2.500z" fill="#9a9a9a"/></svg>
<svg style="left:1267px;top:556px" width="8" height="5" viewBox="0 0 8 5"><path d="M0 0h8L4 4.6z" fill="#7a7a7a"/></svg>
<svg style="left:1283px;top:549px" width="18" height="17" viewBox="0 0 18 17"><rect x="1.500" y="4.500" width="13" height="11" fill="#fdfcf3" stroke="#9c8a55" stroke-width="1"/><rect x="1" y="4" width="14" height="3" fill="#4f7fc4"/><path d="M13 0.5l1.300 2.700 2.900 1.300-2.900 1.300-1.300 2.700-1.300-2.700-2.900-1.300 2.900-1.300z" fill="#fff3a8" stroke="#d6a21c" stroke-width=".9" stroke-linejoin="round"/></svg>
<svg style="left:1305px;top:556px" width="8" height="5" viewBox="0 0 8 5"><path d="M0 0h8L4 4.6z" fill="#1a1a1a"/></svg>
<div style="left:1322px;top:553px;width:10px;height:4px;border:1px solid #555;background:#fff"></div><div style="left:1345px;top:554px;width:10px;height:10px;border:1px solid #555;border-top-width:2px;background:#fff"></div>
<svg style="left:1338px;top:105px" width="10" height="7" viewBox="0 0 10 7"><path d="M1.5 5.500l3.500-3.500 3.500 3.500" stroke="#444" stroke-width="1.900" fill="none"/></svg>
<svg style="left:1338px;top:488px" width="10" height="7" viewBox="0 0 10 7"><path d="M1.5 1.500l3.500 3.500 3.500-3.500" stroke="#444" stroke-width="1.900" fill="none"/></svg>
<svg style="left:1323px;top:505px" width="7" height="10" viewBox="0 0 7 10"><path d="M1.500 1.500l3.500 3.500-3.500 3.500" stroke="#b0b0b0" stroke-width="1.900" fill="none"/></svg>
<svg style="left:1353px;top:593px" width="10" height="7" viewBox="0 0 10 7"><path d="M1.5 5.500l3.500-3.500 3.500 3.500" stroke="#444" stroke-width="1.900" fill="none"/></svg>
<svg style="left:1353px;top:673px" width="10" height="7" viewBox="0 0 10 7"><path d="M1.5 1.500l3.500 3.500 3.500-3.500" stroke="#444" stroke-width="1.900" fill="none"/></svg>
<svg style="left:351px;top:688px" width="7" height="10" viewBox="0 0 7 10"><path d="M5.500 1.500l-3.500 3.500 3.500 3.500" stroke="#b0b0b0" stroke-width="1.900" fill="none"/></svg>
<svg style="left:1338px;top:688px" width="7" height="10" viewBox="0 0 7 10"><path d="M1.500 1.500l3.500 3.500-3.500 3.500" stroke="#b0b0b0" stroke-width="1.900" fill="none"/></svg>
<div style="left:1353px;top:104px;width:8px;height:8px;background:#f0c83c;border:1px solid #d8a820"></div>
<div style="left:1351px;top:116px;width:12px;height:1px;background:#a8a8a8"></div>
<div style="left:1353px;top:118px;width:9px;height:6px;border:1px solid #f0d46a;border-top-width:2px;background:#fffbe6"></div>
<div style="left:666px;top:703px;width:1px;height:22px;background:#a0a0a0"></div>
<div style="left:800px;top:703px;width:1px;height:22px;background:#a0a0a0"></div>
<div style="left:928px;top:703px;width:1px;height:22px;background:#a0a0a0"></div>
<div style="left:1053px;top:707px;width:2px;height:2px;background:#c2c2c2"></div><div style="left:1053px;top:710.6px;width:2px;height:2px;background:#c2c2c2"></div><div style="left:1053px;top:714.2px;width:2px;height:2px;background:#c2c2c2"></div><div style="left:1053px;top:717.8px;width:2px;height:2px;background:#c2c2c2"></div><div style="left:1053px;top:721.4px;width:2px;height:2px;background:#c2c2c2"></div>
<div style="left:1340px;top:707px;width:2px;height:2px;background:#c2c2c2"></div><div style="left:1340px;top:710.6px;width:2px;height:2px;background:#c2c2c2"></div><div style="left:1340px;top:714.2px;width:2px;height:2px;background:#c2c2c2"></div><div style="left:1340px;top:717.8px;width:2px;height:2px;background:#c2c2c2"></div><div style="left:1340px;top:721.4px;width:2px;height:2px;background:#c2c2c2"></div>
<svg style="left:1349px;top:707px" width="12" height="17" viewBox="0 0 12 17"><path d="M6 1a4.500 4.500 0 0 0-2.500 8.200v2.300h5v-2.300A4.500 4.500 0 0 0 6 1z" fill="#fff3b0" stroke="#e0a820" stroke-width="1.100"/><path d="M4 13h4M4.500 15h3" stroke="#8a8aa0" stroke-width="1.200"/></svg>
<svg style="left:16px;top:740px" width="16" height="16" viewBox="0 0 17 17"><path d="M0 2.400l6.900-1v6.700H0zM7.700 1.300L16.900 0v8.100H7.700zM0 8.900h6.900v6.700l-6.900-1zM7.700 8.900h9.200V17l-9.200-1.300z" fill="#111"/></svg>
<svg style="left:60px;top:739px" width="18" height="18" viewBox="0 0 18 18"><circle cx="11" cy="7" r="5.300" fill="none" stroke="#222" stroke-width="1.400"/><path d="M7.200 10.800L1 17" stroke="#222" stroke-width="1.500"/></svg>
<svg style="left:407px;top:739px" width="18" height="18" viewBox="0 0 18 18"><circle cx="9" cy="9" r="7" fill="none" stroke="#111" stroke-width="2.200"/></svg>
<svg style="left:456px;top:739px" width="18" height="17" viewBox="0 0 18 17"><rect x="2.500" y="4" width="10" height="8.500" fill="none" stroke="#111" stroke-width="1.400"/><path d="M2 1h11M2 15.500h11" stroke="#111" stroke-width="1.400"/><path d="M16 1v3M16 8v7" stroke="#111" stroke-width="1.400"/><rect x="14.800" y="5" width="2.400" height="2.400" fill="#111"/></svg>
<svg style="left:502px;top:735px" width="26" height="26" viewBox="0 0 26 26"><defs><linearGradient id="eg" x1="0" y1="0" x2="1" y2="1"><stop offset="0" stop-color="#35c1f1"/><stop offset="1" stop-color="#0c59a4"/></linearGradient><linearGradient id="eg2" x1="0" y1="0" x2="1" y2="0"><stop offset="0" stop-color="#2fbde0"/><stop offset="1" stop-color="#6bdb5a"/></linearGradient></defs><circle cx="13" cy="13" r="12" fill="url(#eg)"/><path d="M2 10C4 3 10 .8 14.500 1c6 .3 10.500 5 10.500 10 0 4-3 6-6.500 6-3 0-4-1.500-3.500-3 1-2-1.500-5-5-5-4 0-7 2.500-8 5z" fill="url(#eg2)"/><path d="M11 13.500c0 6 5 9.500 11 7.500-3 4-10 5-14.500 1C3 18 5 11 11 9.500c-1 1-1 2.500 0 4z" fill="#0f4f9a" opacity=".85"/><circle cx="14.500" cy="13.500" r="3.200" fill="#e8dcd7"/></svg>
<svg style="left:552px;top:738px" width="23" height="20" viewBox="0 0 23 20"><path d="M1 2.500h7l1.500 2H22v14H1z" fill="#f0b429"/><rect x="1" y="5" width="21" height="13.500" rx=".8" fill="#fcd667"/><path d="M6 18.500v-6h11v6h-3v-3.500h-5v3.500z" fill="#3a8fd8"/><rect x="1" y="1.500" width="7" height="2" fill="#d99a1a"/></svg>
<svg style="left:601px;top:735px" width="24" height="26" viewBox="0 0 24 26"><path d="M7.500 7V4.500c0-2 1.500-3 4.500-3s4.500 1 4.500 3V7" fill="none" stroke="#222" stroke-width="1.800"/><rect x=".5" y="7" width="23" height="18" rx="1" fill="#2b2b2b"/><rect x="7" y="10.500" width="4.300" height="4.300" fill="#f25022"/><rect x="12.300" y="10.500" width="4.300" height="4.300" fill="#7fba00"/><rect x="7" y="15.800" width="4.300" height="4.300" fill="#00a4ef"/><rect x="12.300" y="15.800" width="4.300" height="4.300" fill="#ffb900"/></svg>
<svg style="left:650px;top:736px" width="25" height="24" viewBox="0 0 25 24"><path d="M0 9.500L12.500 .5 25 9.500V23H0z" fill="#1a74d0"/><path d="M0 9.500L12.500 .5 25 9.500z" fill="#0f5cb0"/><path d="M2.500 9.500h20L12.500 17z" fill="#fff"/><path d="M0 23l12.500-8L25 23z" fill="#35b0f0"/><path d="M0 9.500V23l9-6.500z" fill="#2a96e8"/><path d="M25 9.500V23l-9-6.500z" fill="#2a96e8"/></svg>
<div style="left:835px;top:728px;width:47px;height:40px;background:#f3ebe8"></div>
<div style="left:691px;top:766px;width:40px;height:2px;background:#1673d1"></div>
<div style="left:740px;top:766px;width:40px;height:2px;background:#1673d1"></div>
<div style="left:789px;top:766px;width:40px;height:2px;background:#1673d1"></div>
<div style="left:835px;top:766px;width:47px;height:2px;background:#1673d1"></div>
<svg style="left:698px;top:735px" width="26" height="26" viewBox="0 0 26 26"><defs><radialGradient id="fg" cx=".5" cy=".3" r=".8"><stop offset="0" stop-color="#ffd43a"/><stop offset=".5" stop-color="#ff8a1e"/><stop offset="1" stop-color="#e8264f"/></radialGradient></defs><circle cx="13" cy="14" r="11" fill="url(#fg)"/><path d="M13 1c1 2 3 3 4.500 5 3-1 5 2 5.500 5l-4-1-6-3z" fill="#ffc22e"/><circle cx="12.500" cy="14.500" r="5.500" fill="#7a3fd0"/><path d="M8 12c2-2 5-2 7 0l-2 3h-4z" fill="#ff9a2a"/></svg>
<svg style="left:748px;top:736px" width="26" height="26" viewBox="0 0 26 26"><path d="M6 3l14-1.500 3 19-14 3z" fill="#8ed3e8"/><path d="M6 3l14-1.500.8 4.500-14 2z" fill="#c8eef8"/><path d="M2 20l7 3.500 14-3-4-2.500z" fill="#9a9a9a" opacity=".6"/><path d="M9 24l14-3-1-3c-5 1-9 2-13 6z" fill="#e8f4f8"/></svg>
<svg style="left:797px;top:736px" width="25" height="25" viewBox="0 0 25 25"><circle cx="12.500" cy="12.500" r="11" fill="none" stroke="#555" stroke-width="2.600" stroke-dasharray="3.400 2.400"/><rect x=".5" y="1" width="24" height="23" rx="2.500" fill="#3f2e7a"/><circle cx="12.500" cy="12.500" r="9.500" fill="none" stroke="#e6e0f0" stroke-width="2" stroke-dasharray="3.200 2.600"/><rect x="1.500" y="7" width="22" height="11" fill="#4a3320"/><text x="12.500" y="12.200" font-family="Liberation Sans,sans-serif" font-size="5.500" font-weight="700" fill="#f6a21e" text-anchor="middle">Java EE</text><text x="12.500" y="17.400" font-family="Liberation Sans,sans-serif" font-size="5.500" font-weight="700" fill="#f6a21e" text-anchor="middle">IDE</text></svg>
<svg style="left:846px;top:736px" width="25" height="25" viewBox="0 0 25 25"><rect x=".7" y=".7" width="23.600" height="23.600" rx="3.500" fill="url(#jg2)" stroke="#8a98aa" stroke-width="1.200"/><defs><linearGradient id="jg2" x1="0" y1="0" x2="0" y2="1"><stop offset="0" stop-color="#fbfcfe"/><stop offset="1" stop-color="#cfdae8"/></linearGradient></defs><path d="M13.500 3.500c2.500 2.500-4 4.500-1.200 8M10.500 6c1.300 2-2.400 3-.7 5.500" stroke="#e2652a" stroke-width="1.500" fill="none"/><path d="M6.500 13.500h11M7.500 16h9M8 18.300h8M6 20.800h13" stroke="#5a7ea8" stroke-width="1.200"/><path d="M17.500 13.500c3.500-.6 3.500 3.200-.3 3.600" stroke="#5a7ea8" stroke-width="1.200" fill="none"/></svg>
<svg style="left:1039px;top:737px" width="22" height="20" viewBox="0 0 22 20"><path d="M6 13a4.500 4.500 0 0 1 .5-9 6 6 0 0 1 11 1.500 3.800 3.800 0 0 1-.5 7.500z" fill="#dfeaf6" stroke="#c0d0e4" stroke-width=".8"/><path d="M10.500 12.500c1.200 1.800 1.800 2.800 1.800 3.800a1.800 1.800 0 0 1-3.600 0c0-1 .6-2 1.800-3.800z" fill="#3a8fe0"/></svg>
<svg style="left:1117px;top:743px" width="12" height="8" viewBox="0 0 12 8"><path d="M1 6.500l5-5 5 5" stroke="#111" stroke-width="1.500" fill="none"/></svg>
<svg style="left:1139px;top:739px" width="20" height="18" viewBox="0 0 20 18"><path d="M4.500 10.500a3.200 3.200 0 0 1 .5-6.300 4.600 4.600 0 0 1 8.600 1 3 3 0 0 1 .2 5.300z" fill="#8a8a8a" stroke="#222" stroke-width="1.300"/><circle cx="13.500" cy="12.500" r="4.300" fill="#e0202c"/><path d="M11.700 10.700l3.600 3.600M15.300 10.700l-3.600 3.600" stroke="#fff" stroke-width="1.300"/></svg>
<svg style="left:1166px;top:739px" width="18" height="18" viewBox="0 0 18 18"><path d="M2 15A13 13 0 0 1 15 2" fill="none" stroke="#8a8a8a" stroke-width="1.200"/><path d="M5 15.500A10 10 0 0 1 15 5.500" fill="none" stroke="#222" stroke-width="1.300"/><path d="M8.500 16A6.500 6.500 0 0 1 15 9.500" fill="none" stroke="#222" stroke-width="1.300"/><circle cx="14" cy="15" r="1.700" fill="#111"/></svg>
<svg style="left:1187px;top:740px" width="20" height="16" viewBox="0 0 20 16"><path d="M1 5.500h3l4-4v13l-4-4H1z" fill="none" stroke="#111" stroke-width="1.200" stroke-linejoin="round"/><path d="M10.500 5a4 4 0 0 1 0 6M12.800 3a7 7 0 0 1 0 10" fill="none" stroke="#111" stroke-width="1.100"/><path d="M15 1a10 10 0 0 1 0 14" fill="none" stroke="#9a9a9a" stroke-width="1"/></svg>
<svg style="left:1326px;top:737px" width="28" height="28" viewBox="0 0 28 28"><path d="M1 1h16v11.500H8.500L5 16v-3.500H1z" fill="#111"/><path d="M4 4h10M4 6.500h10M4 9h10" stroke="#e8dcd7" stroke-width="1"/><circle cx="17.500" cy="17.500" r="8.500" fill="#cfc6c2" stroke="#4a4a4a" stroke-width="1"/></svg>
<span class="t" style="left:1337.5px;top:747px;font-size:11.5px;line-height:16px;color:#111;transform:scaleX(1.0549);">14</span>
<div style="left:107px;top:100px;width:866px;height:551px;background:#eeeeee;border:1px solid #5a5a5a;box-shadow:0 4px 14px rgba(0,0,0,.33)"></div>
<div style="left:108px;top:101px;width:864px;height:30px;background:#fff"></div>
<div style="left:108px;top:131px;width:864px;height:22px;background:linear-gradient(180deg,#ffffff,#e6e6e6)"></div>
<div style="left:108px;top:153px;width:864px;height:1px;background:#c4c4c4"></div>
<div style="left:128px;top:177px;width:661px;height:463px;background:#eeeeee;border:5px solid #6382bf;border-radius:3px"></div>
<div style="left:133px;top:182px;width:651px;height:23px;background:linear-gradient(180deg,#eef3fa,#c8ddf2);border-bottom:1px solid #6382bf"></div>
<span class="t" style="left:137px;top:107.5px;font-size:12px;line-height:17px;color:#000;transform:scaleX(0.9638);">X - Sistema para controle de OS</span>
<span class="t" style="left:114px;top:133.5px;font-size:12px;line-height:17px;color:#333;font-weight:700;">Cadastro</span>
<span class="t" style="left:179px;top:133.5px;font-size:12px;line-height:17px;color:#333;font-weight:700;transform:scaleX(0.9805);">Relatorio</span>
<span class="t" style="left:242px;top:133.5px;font-size:12px;line-height:17px;color:#333;font-weight:700;transform:scaleX(0.9597);">Ajuda</span>
<span class="t" style="left:287px;top:133.5px;font-size:12px;line-height:17px;color:#333;font-weight:700;">Opcoes</span>
<div class="tfd" style="left:163px;top:268px;width:61px;height:20px"></div>
<div class="tfd" style="left:251px;top:268px;width:138px;height:20px"></div>
<span class="t" style="left:166px;top:270.7px;font-size:12px;line-height:17px;color:#b8cfe5;">4</span>
<span class="t" style="left:253.5px;top:270.7px;font-size:12px;line-height:17px;color:#b8cfe5;transform:scaleX(1.0172);">21/06/2021 20:18:45</span>
<div style="left:411px;top:224px;width:355px;height:140px;border:1px solid #b8cfe5"></div>
<div style="left:415px;top:222px;width:43px;height:5px;background:#eeeeee"></div>
<div class="tfd" style="left:429px;top:237px;width:149px;height:20px;border-color:#a8bdd2"></div>
<div class="tfd" style="left:649px;top:237px;width:86px;height:20px"></div>
<span class="t" style="left:652px;top:240px;font-size:12px;line-height:17px;color:#b8cfe5;">6</span>
<div style="left:429px;top:268px;width:308px;height:88px;background:#fff"></div>
<div style="left:265px;top:378px;width:178px;height:22px;border:1px solid #7a8a99;background:linear-gradient(180deg,#e6edf5,#f4f7fb 45%,#dfe8f2)"></div>
<div style="left:423px;top:379px;width:19px;height:20px;border-left:1px solid #7a8a99;background:linear-gradient(180deg,#dde8f3,#ffffff 45%,#c9dbee)"></div>
<svg style="left:427px;top:386px" width="12" height="7" viewBox="0 0 12 7"><path d="M0.5 0.5h11L6 6.5z" fill="#222"/></svg>
<div class="tf" style="left:265px;top:413px;width:447px;height:19px"></div>
<div class="tf" style="left:265px;top:444px;width:447px;height:19px"></div>
<div class="tf" style="left:265px;top:475px;width:447px;height:19px"></div>
<div class="tf" style="left:264px;top:506px;width:204px;height:19px"></div>
<div class="tf" style="left:569px;top:506px;width:143px;height:19px"></div>
<span class="t" style="left:267px;top:415.5px;font-size:12px;line-height:17px;color:#333333;">Monitor</span>
<span class="t" style="left:267px;top:446.5px;font-size:12px;line-height:17px;color:#333333;">falhando</span>
<span class="t" style="left:267px;top:477.5px;font-size:12px;line-height:17px;color:#333333;">trocar trela</span>
<span class="t" style="left:266px;top:508.5px;font-size:12px;line-height:17px;color:#333333;">Paulo</span>
<span class="t" style="left:571px;top:508.5px;font-size:12px;line-height:17px;color:#333333;">485.36</span>
<div style="left:157px;top:318px;width:12px;height:12px;border-radius:50%;border:1px solid #7a8a99;background:radial-gradient(circle at 40% 35%,#fff 20%,#d4e0ee 100%)"></div>
<div style="left:255px;top:318px;width:12px;height:12px;border-radius:50%;border:1px solid #7a8a99;background:radial-gradient(circle at 40% 35%,#fff 20%,#d4e0ee 100%)"></div>
<div style="left:258px;top:321px;width:6px;height:6px;border-radius:50%;background:#222"></div>
<div style="left:199px;top:549px;width:89px;height:78px;border:1px solid #999;background:#eeeeee"></div>
<div class="btn" style="left:332px;top:549px;width:89px;height:78px"></div>
<div style="left:343px;top:555px;width:66px;height:66px;border:1px solid #9eb2c9"></div>
<div class="btn" style="left:470px;top:552px;width:89px;height:75px"></div>
<div class="btn" style="left:607px;top:552px;width:89px;height:75px"></div>
<span class="t" style="left:159px;top:185.8px;font-size:12px;line-height:17px;color:#000;font-weight:700;transform:scaleX(0.9514);">OS</span>
<span class="t" style="left:153.5px;top:249.5px;font-size:12px;line-height:17px;color:#333333;font-weight:700;transform:scaleX(0.9189);">Nº OS</span>
<span class="t" style="left:251.5px;top:249.5px;font-size:12px;line-height:17px;color:#333333;font-weight:700;transform:scaleX(0.9417);">Data</span>
<span class="t" style="left:174.5px;top:317px;font-size:12px;line-height:17px;color:#333333;font-weight:700;transform:scaleX(0.9943);">Orçamento</span>
<span class="t" style="left:272px;top:317px;font-size:12px;line-height:17px;color:#333333;font-weight:700;transform:scaleX(0.9802);">OS</span>
<span class="t" style="left:417px;top:216.5px;font-size:12px;line-height:17px;color:#333333;font-weight:700;transform:scaleX(0.9621);">Cliente</span>
<span class="t" style="left:619px;top:240px;font-size:12px;line-height:17px;color:#333333;font-weight:700;transform:scaleX(0.9372);">* Id</span>
<span class="t" style="left:183px;top:381.5px;font-size:12px;line-height:17px;color:#333333;font-weight:700;transform:scaleX(0.9797);">Situação</span>
<span class="t" style="left:268px;top:380.5px;font-size:12px;line-height:17px;color:#333333;font-weight:700;transform:scaleX(0.9872);">Na bancada</span>
<span class="t" style="left:163.5px;top:415.5px;font-size:12px;line-height:17px;color:#333333;font-weight:700;transform:scaleX(0.9760);">* Equipamento</span>
<span class="t" style="left:182px;top:446.5px;font-size:12px;line-height:17px;color:#333333;font-weight:700;transform:scaleX(0.9859);">* Defeito</span>
<span class="t" style="left:193px;top:477.5px;font-size:12px;line-height:17px;color:#333333;font-weight:700;transform:scaleX(0.9686);">Serviço</span>
<span class="t" style="left:182px;top:508.5px;font-size:12px;line-height:17px;color:#333333;font-weight:700;transform:scaleX(0.9921);">Técnico</span>
<span class="t" style="left:499px;top:505.5px;font-size:12px;line-height:17px;color:#333333;font-weight:700;transform:scaleX(1.0088);">Valor Total</span>
<svg style="left:116px;top:107px" width="17" height="17" viewBox="0 0 17 17"><defs><linearGradient id="jg" x1="0" y1="0" x2="0" y2="1"><stop offset="0" stop-color="#f6f9fd"/><stop offset="1" stop-color="#cfdbe9"/></linearGradient></defs><rect x=".6" y=".6" width="15.800" height="15.800" rx="2" fill="url(#jg)" stroke="#66788c" stroke-width="1.200"/><path d="M9 2.500c1.500 1.500-2.500 2.800-.8 5M7.200 4c.8 1.200-1.500 1.800-.4 3.500" stroke="#e2652a" stroke-width="1.100" fill="none"/><path d="M4.500 9.300h7M5 11h6M5.500 12.600h5M4 14.200h8" stroke="#5a7ea8" stroke-width=".9"/><path d="M11.500 9.300c2.200-.4 2.200 2-.2 2.300" stroke="#5a7ea8" stroke-width=".9" fill="none"/></svg>
<div style="left:853px;top:115px;width:10px;height:1px;background:#111"></div>
<div style="left:898px;top:110px;width:10px;height:10px;border:1px solid #cfcfcf"></div>
<svg style="left:943px;top:109px" width="12" height="12" viewBox="0 0 12 12"><path d="M.7.700l10.600 10.600M11.300.700l-10.600 10.600" stroke="#111" stroke-width="1.200"/></svg>
<svg style="left:182px;top:186px" width="533" height="16" viewBox="0 0 533 16"><defs><pattern id="bm" width="4" height="4" patternUnits="userSpaceOnUse"><rect x="0" y="0" width="1" height="1" fill="#fff"/><rect x="1" y="1" width="1" height="1" fill="#7f93b8"/><rect x="2" y="2" width="1" height="1" fill="#fff"/><rect x="3" y="3" width="1" height="1" fill="#7f93b8"/></pattern></defs><rect width="533" height="16" fill="#dbe7f5" opacity=".7"/><rect width="533" height="16" fill="url(#bm)"/></svg>
<svg style="left:138px;top:185px" width="16" height="16" viewBox="0 0 16 16"><rect x="1" y="1" width="14" height="14" rx="1.500" fill="#fff" stroke="#7a8a99" stroke-width="1.800"/><path d="M1.500 5h13" stroke="#7a8a99" stroke-width="1.200"/><path d="M3.500 3h1M6 3h1M8.500 3h1M11 3h1" stroke="#7a8a99" stroke-width="1"/></svg>
<svg style="left:720px;top:183px" width="16" height="16" viewBox="0 0 16 16"><rect x="1.700" y="8.700" width="5.600" height="5.600" fill="#dfe9f5" stroke="#34466a" stroke-width="1.400"/><path d="M14 1.500l-4.500 4.500M9.300 2.800v3.400h3.400" stroke="#111" stroke-width="1.100" fill="none"/></svg>
<svg style="left:739px;top:183px" width="16" height="16" viewBox="0 0 16 16"><rect x="1.700" y="7.200" width="7.600" height="7.600" fill="#dfe9f5" stroke="#34466a" stroke-width="1.400"/><path d="M3.500 13l9.500-9.500M9.500 3.200h3.800v3.800" stroke="#111" stroke-width="1.100" fill="none"/></svg>
<svg style="left:765px;top:185px" width="14" height="14" viewBox="0 0 14 14"><rect x=".8" y=".8" width="12.400" height="12.400" fill="#e6eef8" stroke="#34466a" stroke-width="1.600"/><path d="M3 3l8 8M11 3l-8 8" stroke="#111" stroke-width="1.300"/></svg>
<svg style="left:584px;top:231px" width="30" height="28" viewBox="0 0 30 28"><circle cx="10.500" cy="10" r="7" fill="none" stroke="#161616" stroke-width="1.500"/><rect x="-5.400" y="-2.100" width="10.800" height="4.200" rx="2.100" fill="none" stroke="#161616" stroke-width="1.500" transform="translate(21.700 19.700) rotate(42)"/></svg>
<svg style="left:824px;top:366px" width="104" height="128" viewBox="0 0 104 128"><g fill="none" stroke="#161616" stroke-width="3.300" stroke-linejoin="round" style="filter:blur(.4px)"><path d="M7.200 24.600L38.500 5.900 52 28.800 64.500 5.900 96.800 24.600 73.900 64.200 96.800 103.800 64.500 122.500 52 100.700 38.500 122.500 7.200 103.800 31.200 64.200Z"/><path d="M17.700 27.700L36.400 16.300 52 42.300 66.600 16.300 87.500 27.700 64.500 64.200 87.500 100.700 66.600 111 52 86 36.400 111 17.700 100.700 39.500 64.200Z"/></g></svg>
<svg style="left:205px;top:552px" width="78" height="72" viewBox="0 0 78 72"><g fill="none" stroke="#c9c9c9" stroke-linecap="round" stroke-linejoin="round"><path d="M57 24V10c0-3-2-5-5-5H22L8.500 18.500V61c0 3 2 5 5 5H40" stroke-width="4.600"/><path d="M9 19L22.500 5.500V15c0 2.500-1.500 4-4 4z" fill="#c9c9c9" stroke-width="1"/><path d="M48 27v38M29 46h38" stroke-width="8.500" stroke="#c6c6c6"/></g></svg>
<svg style="left:345px;top:557px" width="62" height="62" viewBox="0 0 62 62"><circle cx="25.500" cy="25.500" r="18.500" fill="#5eb2f2" stroke="#5a5a5a" stroke-width="4.600"/><path d="M14 20a12.500 12.500 0 0 1 21-3.500" fill="none" stroke="#cfe8fc" stroke-width="1.800" stroke-linecap="round"/><path d="M39.500 39.500l16 16" stroke="#2e3c47" stroke-width="5.400"/></svg>
<svg style="left:484px;top:562px" width="68" height="62" viewBox="0 0 68 62"><rect x="3.500" y="4" width="53" height="45" rx="5" fill="#8fc1e2"/><circle cx="44.800" cy="16" r="4.200" fill="#b9dcf1"/><path d="M10 38.500l13.500-20 10 14.500 5.500-6.500 9.500 12z" fill="#a7d1ec"/><path d="M29 38.500l11-12 10 12z" fill="#c3e3f5"/><g transform="translate(32.400 58.400) rotate(-42.500)"><path d="M0 0l6.500-3.600v7.200z" fill="#f1c27a"/><path d="M0 0l2.600-1.450v2.900z" fill="#222"/><rect x="6.500" y="-3.600" width="23.500" height="7.200" fill="#f79a0e"/><rect x="6.500" y="-3.600" width="23.500" height="2.400" fill="#fbb040"/><rect x="30" y="-3.600" width="1.600" height="7.200" fill="#c9c2b8"/><path d="M31.600 -3.600h3.200a1.800 1.800 0 0 1 1.800 1.800v3.600a1.800 1.800 0 0 1 -1.800 1.800h-3.200z" fill="#e96a6a"/></g></svg>
<svg style="left:622px;top:556px" width="60" height="68" viewBox="0 0 60 68"><path d="M20.500 11.500c.8-5.500 4.500-8.200 10-7.500 5.500.8 9 4 8.500 9.500" fill="none" stroke="#3a7bbf" stroke-width="3.600"/><rect x="-23.800" y="-2.700" width="47.600" height="5.400" rx="2.200" fill="#3a7bbf" transform="translate(28.800 14.300) rotate(12.100)"/><path d="M5 25h48.500l-6.500 34.500c-.6 2.800-2 4-4.800 4H16.500c-2.800 0-4.300-1.200-4.900-4z" fill="#2d3e50"/><path d="M15.500 32l5.500 24M29.300 32v24M43 32l-5.500 24" stroke="#f4f7fa" stroke-width="2.600" stroke-linecap="round"/></svg>
<span class="t" style="left:809.5px;top:218.5px;font-size:22px;line-height:31px;color:#e8000c;transform:scaleX(0.9910);">Administrador</span>
<span class="t" style="left:816px;top:285.5px;font-size:19px;line-height:27px;color:#222;transform:scaleX(1.0358);">22/06/2021</span></body></html>
